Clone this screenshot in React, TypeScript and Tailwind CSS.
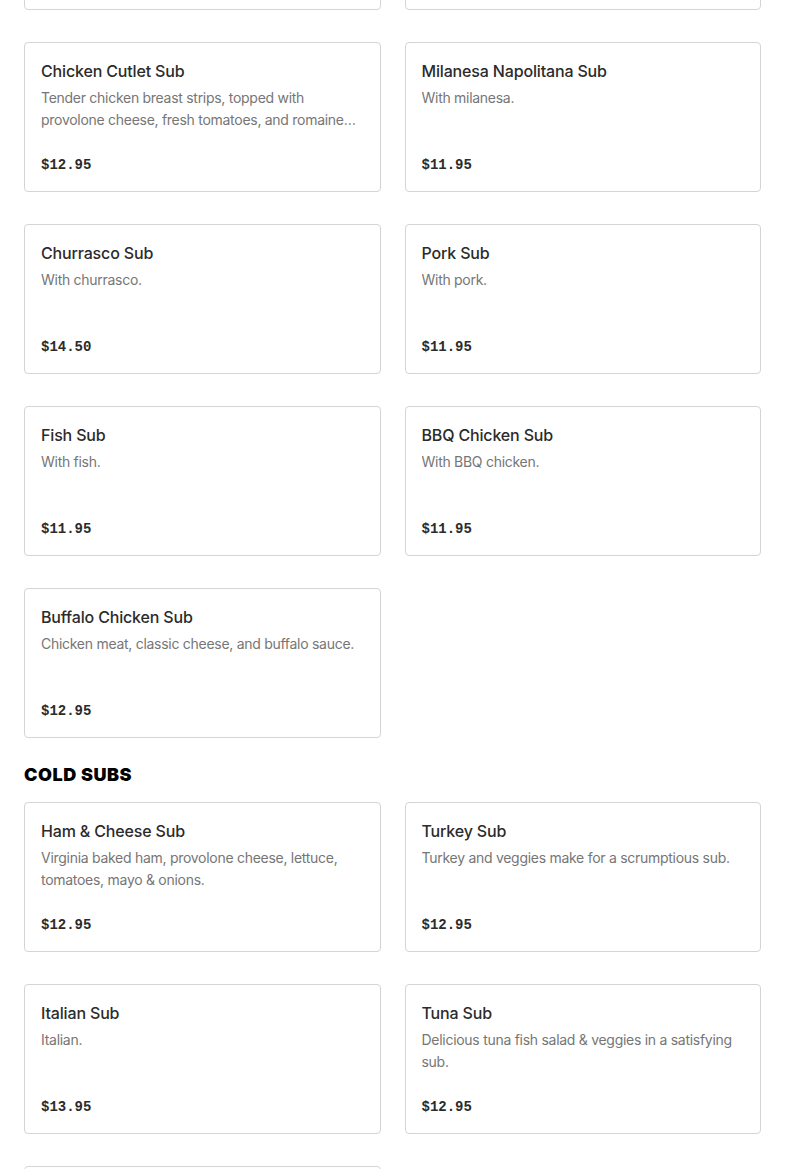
import React from "react";

type Item = { name: string; desc: string; price: string };

const hot: Item[] = [
  { name: "Steak Sub", desc: "With steak.", price: "$12.95" },
  { name: "Cheesesteak Sub", desc: "With cheese.", price: "$12.95" },
  {
    name: "Chicken Cutlet Sub",
    desc: "Tender chicken breast strips, topped with provolone cheese, fresh tomatoes, and romaine lettuce, served on a toasted sub roll.",
    price: "$12.95",
  },
  { name: "Milanesa Napolitana Sub", desc: "With milanesa.", price: "$11.95" },
  { name: "Churrasco Sub", desc: "With churrasco.", price: "$14.50" },
  { name: "Pork Sub", desc: "With pork.", price: "$11.95" },
  { name: "Fish Sub", desc: "With fish.", price: "$11.95" },
  { name: "BBQ Chicken Sub", desc: "With BBQ chicken.", price: "$11.95" },
  { name: "Buffalo Chicken Sub", desc: "Chicken meat, classic cheese, and buffalo sauce.", price: "$12.95" },
];

const cold: Item[] = [
  { name: "Ham & Cheese Sub", desc: "Virginia baked ham, provolone cheese, lettuce, tomatoes, mayo & onions.", price: "$12.95" },
  { name: "Turkey Sub", desc: "Turkey and veggies make for a scrumptious sub.", price: "$12.95" },
  { name: "Italian Sub", desc: "Italian.", price: "$13.95" },
  { name: "Tuna Sub", desc: "Delicious tuna fish salad & veggies in a satisfying sub.", price: "$12.95" },
  { name: "Veggie Sub", desc: "With veggies.", price: "$11.95" },
];

function Card({ item }: { item: Item }) {
  return (
    <div className="flex flex-col rounded-[4px] border border-[#d4d4d4] bg-white px-4 pt-4 pb-[14px]">
      <div className="text-[16px] font-medium leading-6 tracking-[-0.01em] text-[#2b2b2b] truncate">{item.name}</div>
      <div className="mt-1 h-[44px] text-[14px] leading-[22px] tracking-[-0.02em] text-[#767676] line-clamp-2">{item.desc}</div>
      <div
        className="mt-[22px] text-[14px] font-bold leading-6 text-[#2b2b2b]"
        style={{ fontFamily: '"Liberation Mono", "DejaVu Sans Mono", monospace' }}
      >
        {item.price}
      </div>
    </div>
  );
}

export default function App() {
  return (
    <div className="h-[1169px] overflow-hidden bg-white" style={{ fontFamily: 'Inter, "Noto Sans", sans-serif' }}>
      <div className="-mt-[140px] px-6">
        <div className="grid grid-cols-2 gap-x-6 gap-y-8">
          {hot.map((it) => (
            <Card key={it.name} item={it} />
          ))}
        </div>
        <h2 className="mt-[25px] mb-[15px] text-[18px] font-black leading-6 tracking-[0.03em] text-black">COLD SUBS</h2>
        <div className="grid grid-cols-2 gap-x-6 gap-y-8">
          {cold.map((it) => (
            <Card key={it.name} item={it} />
          ))}
        </div>
      </div>
    </div>
  );
}
